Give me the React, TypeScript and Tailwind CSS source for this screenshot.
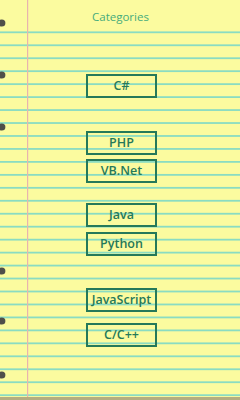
import React from 'react';

const CATEGORIES: { label: string; gap: string }[] = [
  { label: 'C#', gap: 'mt-[49px]' },
  { label: 'PHP', gap: 'mt-[33px]' },
  { label: 'VB.Net', gap: 'mt-[4px]' },
  { label: 'Java', gap: 'mt-[20px]' },
  { label: 'Python', gap: 'mt-[5px]' },
  { label: 'JavaScript', gap: 'mt-[32px]' },
  { label: 'C/C++', gap: 'mt-[11px]' },
];

const HOLES = [23, 75, 127, 271, 321, 375];

// ruled notepad paper: blue lines, red margin, punched holes
const Paper: React.FC = () => {
  const lines: number[] = [];
  for (let y = 32.3; y < 396; y += 12.96) lines.push(y);
  return (
    <svg className="absolute inset-0" width="240" height="400" viewBox="0 0 240 400">
      <rect width="240" height="400" fill="#fbfb9f" />
      {lines.map((y) => (
        <rect key={y} x="0" y={y - 0.9} width="240" height="1.8" fill="#8adcc2" />
      ))}
      <rect x="27" y="0" width="1.2" height="397" fill="#e8b4ae" />
      {HOLES.map((y) => (
        <circle key={y} cx="1.8" cy={y} r="3.6" fill="#4f4f4a" />
      ))}
      <rect x="0" y="397" width="240" height="3" fill="#b5ad80" />
    </svg>
  );
};

export default function App() {
  return (
    <div className="relative w-[240px] h-[400px] overflow-hidden font-['Open_Sans','Noto_Sans',sans-serif]">
      <Paper />
      <div className="relative flex flex-col">
        <div className="pt-[9px] pl-[92px] text-[11.5px] leading-[16px] text-[#46ac7c]">Categories</div>
        {CATEGORIES.map((c) => (
          <div
            key={c.label}
            className={`${c.gap} ml-[86px] w-[71px] h-[24px] border-2 border-[#25795a] flex items-center justify-center text-[12.5px] font-semibold text-[#25795a]`}
          >
            {c.label}
          </div>
        ))}
      </div>
    </div>
  );
}
